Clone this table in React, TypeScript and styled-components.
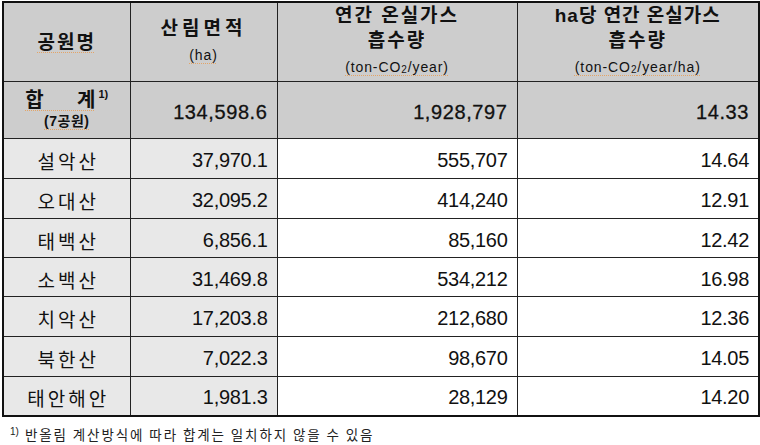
import { ReactElement } from 'react'
import styled, { createGlobalStyle } from 'styled-components'

const GlobalStyle = createGlobalStyle`
  html, body {
    margin: 0;
    padding: 0;
    background: #ffffff;
  }
  body {
    font-family: "Liberation Sans", "Noto Sans CJK KR", sans-serif;
    color: #111111;
  }
`

const StyledPage = styled.div`
  width: 760px;
  height: 445px;
  padding: 1px 0 0 2px;
  box-sizing: border-box;
  overflow: hidden;
`

const StyledTable = styled.table`
  width: 756px;
  border-collapse: collapse;
  table-layout: fixed;
  border: 2px solid #111111;
`

const StyledHeadCell = styled.th`
  background: #cdcdcd;
  border: 1px solid #222222;
  font-weight: bold;
  font-size: 19px;
  text-align: center;
  vertical-align: middle;
  padding: 0;
  line-height: 25px;
`

const StyledHeadTitle = styled.div<{ $spacing?: number }>`
  letter-spacing: ${({ $spacing }) => $spacing ?? 1}px;
`

const StyledHeadUnit = styled.div`
  font-weight: normal;
  font-size: 14px;
  letter-spacing: 0.9px;
  line-height: 28px;

  & sub {
    font-size: 10px;
    vertical-align: -1px;
    line-height: 0;
  }
`

const StyledSquiggle = styled.span`
  text-decoration: underline dotted #e3a467;
  text-underline-offset: 3px;
  text-decoration-thickness: 1px;
`

const StyledSup = styled.sup`
  font-size: 11px;
  letter-spacing: 0;
  vertical-align: 9px;
  line-height: 0;
  margin-left: 3px;
`

const StyledTotalLabel = styled.th`
  background: #cdcdcd;
  border: 1px solid #222222;
  padding: 2px 0 0;
  text-align: center;
  vertical-align: middle;
  font-weight: bold;
  font-size: 20px;
  line-height: 21px;
`

const StyledTotalSub = styled.div`
  font-size: 14px;
  letter-spacing: 0.5px;
`

const StyledNameCell = styled.td`
  background: #e8e8e8;
  border: 1px solid #222222;
  text-align: center;
  vertical-align: middle;
  font-size: 19px;
  letter-spacing: 3px;
  padding: 4px 0 0 3px;
`

const StyledNumCell = styled.td<{ $shade: 'head' | 'light' | 'none'; $bold?: boolean }>`
  background: ${({ $shade }) =>
    $shade === 'head' ? '#cdcdcd' : $shade === 'light' ? '#e8e8e8' : '#ffffff'};
  border: 1px solid #222222;
  text-align: right;
  vertical-align: middle;
  font-size: 20px;
  letter-spacing: ${({ $bold }) => ($bold ? '0.6px' : '-0.3px')};
  -webkit-text-stroke: ${({ $bold }) => ($bold ? '0.3px #111' : '0')};
  padding: 4px 9px 0 0;
`

const StyledFootnote = styled.div`
  margin: 7px 0 0 8px;
  font-size: 13.5px;
  letter-spacing: 1.9px;
  color: #222222;
  font-family: "Noto Sans CJK KR", "Liberation Sans", sans-serif;
`

const StyledFootSup = styled.sup`
  font-family: "Liberation Sans", sans-serif;
  font-size: 10px;
  letter-spacing: 0;
  vertical-align: 5px;
  margin-right: 6px;
`

type Park = {
  name: string
  area: string
  total: string
  perHa: string
  height: number
}

const parks: Park[] = [
  { name: '설악산', area: '37,970.1', total: '555,707', perHa: '14.64', height: 40 },
  { name: '오대산', area: '32,095.2', total: '414,240', perHa: '12.91', height: 40 },
  { name: '태백산', area: '6,856.1', total: '85,160', perHa: '12.42', height: 39 },
  { name: '소백산', area: '31,469.8', total: '534,212', perHa: '16.98', height: 39 },
  { name: '치악산', area: '17,203.8', total: '212,680', perHa: '12.36', height: 40 },
  { name: '북한산', area: '7,022.3', total: '98,670', perHa: '14.05', height: 40 },
  { name: '태안해안', area: '1,981.3', total: '28,129', perHa: '14.20', height: 39 },
]

export default function App(): ReactElement {
  return (
    <StyledPage>
      <GlobalStyle />
      <StyledTable>
        <colgroup>
          <col style={{ width: 127 }} />
          <col style={{ width: 147 }} />
          <col style={{ width: 240 }} />
          <col style={{ width: 242 }} />
        </colgroup>
        <thead>
          <tr style={{ height: 76 }}>
            <StyledHeadCell>
              <StyledHeadTitle $spacing={2}>
                <StyledSquiggle>공원명</StyledSquiggle>
              </StyledHeadTitle>
            </StyledHeadCell>
            <StyledHeadCell>
              <StyledHeadTitle $spacing={4}>산림면적</StyledHeadTitle>
              <StyledHeadUnit>
                <StyledSquiggle>(ha)</StyledSquiggle>
              </StyledHeadUnit>
            </StyledHeadCell>
            <StyledHeadCell>
              <StyledHeadTitle $spacing={2}>연간 온실가스</StyledHeadTitle>
              <StyledHeadTitle $spacing={2}>흡수량</StyledHeadTitle>
              <StyledHeadUnit>
                <StyledSquiggle>
                  (ton-CO<sub>2</sub>/year)
                </StyledSquiggle>
              </StyledHeadUnit>
            </StyledHeadCell>
            <StyledHeadCell>
              <StyledHeadTitle $spacing={1}>ha당 연간 온실가스</StyledHeadTitle>
              <StyledHeadTitle $spacing={2}>흡수량</StyledHeadTitle>
              <StyledHeadUnit>
                <StyledSquiggle>
                  (ton-CO<sub>2</sub>/year/ha)
                </StyledSquiggle>
              </StyledHeadUnit>
            </StyledHeadCell>
          </tr>
        </thead>
        <tbody>
          <tr style={{ height: 57 }}>
            <StyledTotalLabel>
              <div>
                <StyledSquiggle>합&nbsp;&nbsp;&nbsp;&nbsp;&nbsp;&nbsp;계</StyledSquiggle>
                <StyledSup>1)</StyledSup>
              </div>
              <StyledTotalSub>
                <StyledSquiggle>(7공원)</StyledSquiggle>
              </StyledTotalSub>
            </StyledTotalLabel>
            <StyledNumCell $shade="head" $bold>
              134,598.6
            </StyledNumCell>
            <StyledNumCell $shade="head" $bold>
              1,928,797
            </StyledNumCell>
            <StyledNumCell $shade="head" $bold>
              14.33
            </StyledNumCell>
          </tr>
          {parks.map((park) => (
            <tr key={park.name} style={{ height: park.height }}>
              <StyledNameCell>{park.name}</StyledNameCell>
              <StyledNumCell $shade="light">{park.area}</StyledNumCell>
              <StyledNumCell $shade="none">{park.total}</StyledNumCell>
              <StyledNumCell $shade="none">{park.perHa}</StyledNumCell>
            </tr>
          ))}
        </tbody>
      </StyledTable>
      <StyledFootnote>
        <StyledFootSup>1)</StyledFootSup>
        반올림 계산방식에 따라 합계는 일치하지 않을 수 있음
      </StyledFootnote>
    </StyledPage>
  )
}
